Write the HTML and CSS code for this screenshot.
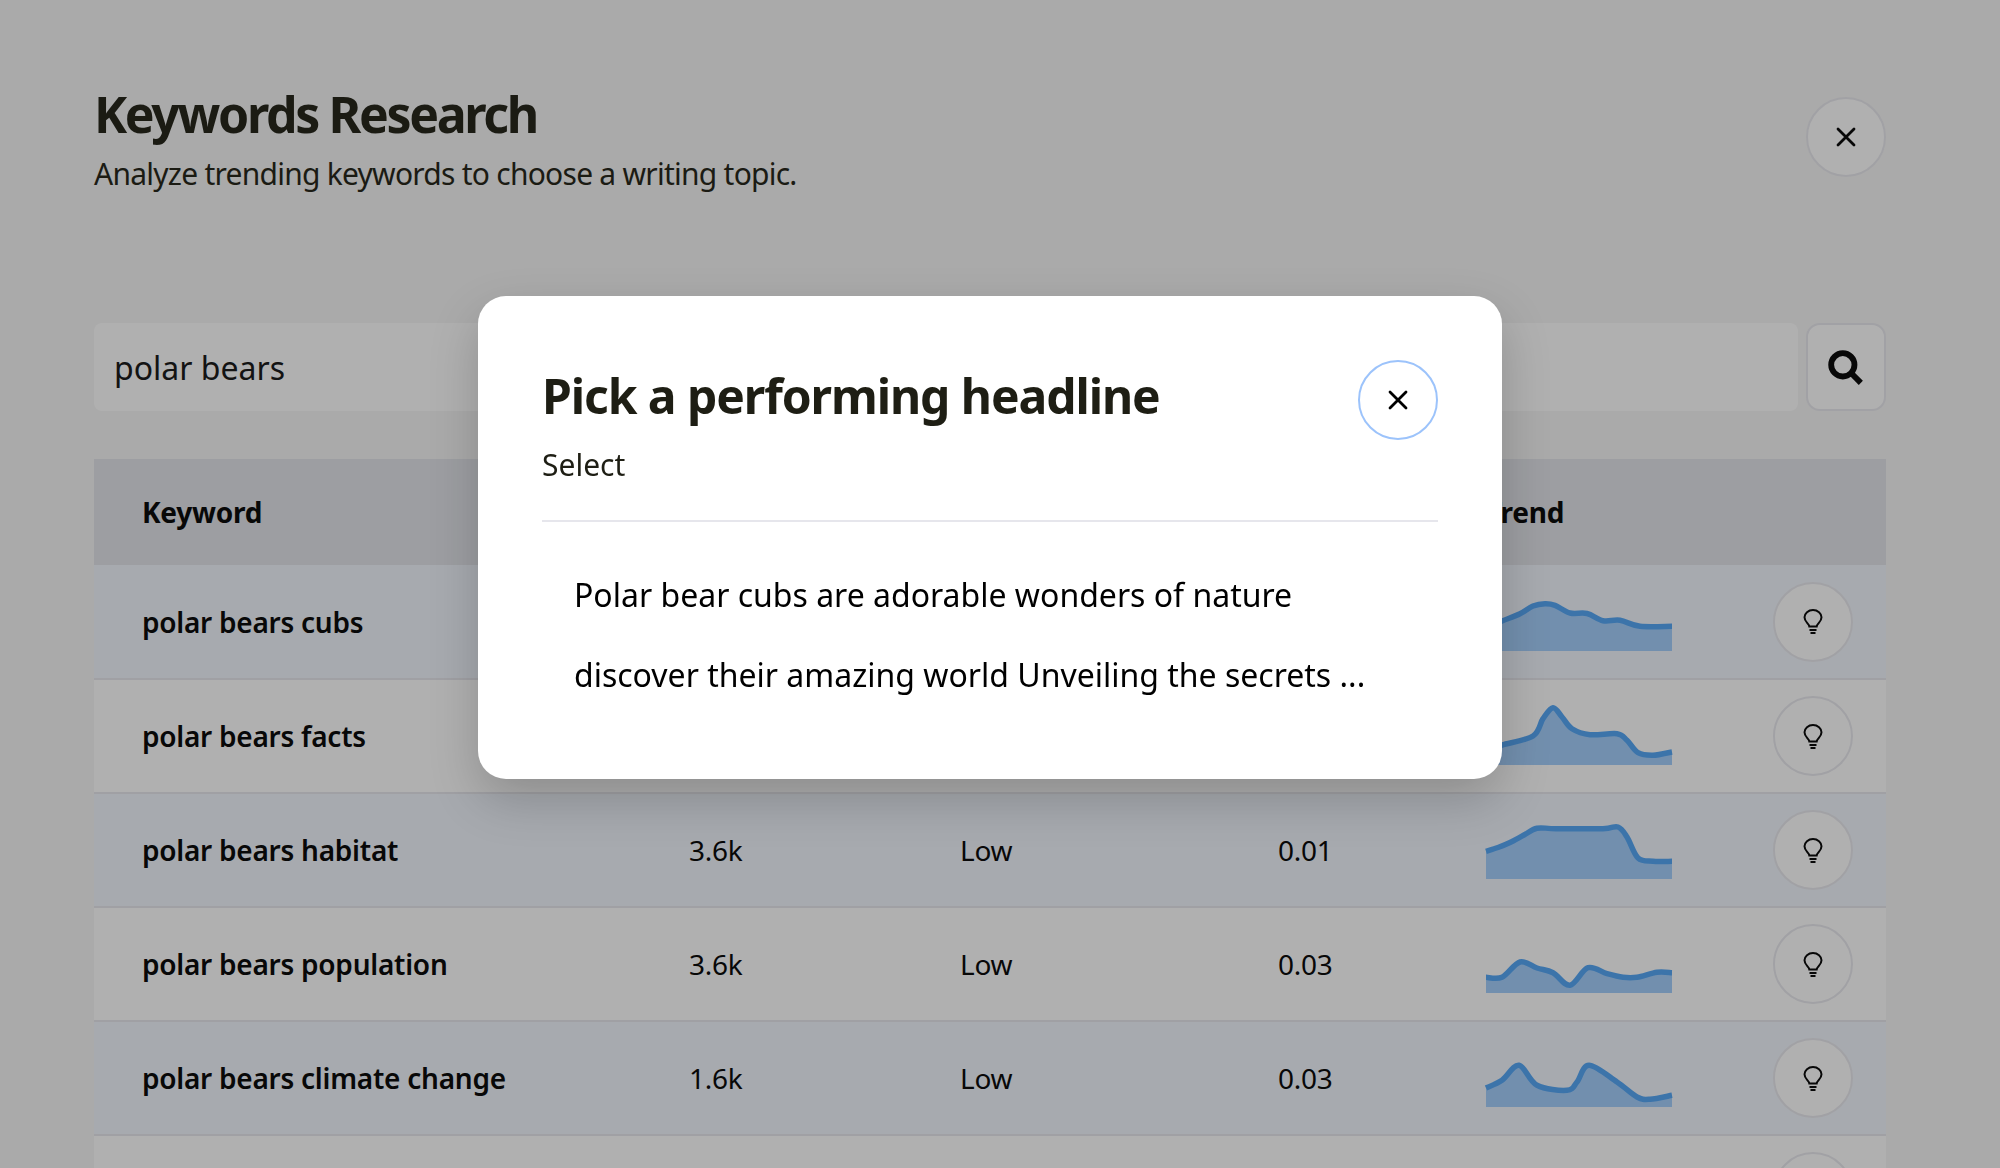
FILE: index.html
```html
<!DOCTYPE html>
<html lang="en">
<head>
    <meta charset="UTF-8">
    <title>Keywords Research</title>
    <link rel="stylesheet" href="styles.css">
</head>
<body>
    <main class="page">
        <header class="page-head">
            <div>
                <h1>Keywords Research</h1>
                <p class="subtitle">Analyze trending keywords to choose a writing topic.</p>
            </div>
            <button class="round-btn page-close">
                <svg class="icon-x" viewBox="0 0 20 20"><path d="M2 2 18 18M18 2 2 18"/></svg>
            </button>
        </header>

        <div class="search">
            <div class="search-input">polar bears</div>
            <button class="search-btn">
                <svg class="icon-search" viewBox="0 0 34 34"><circle cx="14" cy="14" r="11"/><path d="M22 22 31 31"/></svg>
            </button>
        </div>

        <table class="keywords">
            <colgroup>
                <col class="col-keyword">
                <col class="col-volume">
                <col class="col-comp">
                <col class="col-cpc">
                <col class="col-trend">
                <col class="col-action">
            </colgroup>
            <thead>
                <tr><th>Keyword</th><th></th><th></th><th></th><th>Trend</th><th></th></tr>
            </thead>
            <tbody>
                <tr>
                    <td>polar bears cubs</td><td></td><td></td><td></td>
                    <td><svg class="spark" data-points="0,36 16,29 34,21.7 47,14 59,11.7 69,13.3 84,21 101,21.500 117,28.700 134,28.300 154,34.300 186,34.300"></svg></td>
                    <td><button class="round-btn"><svg class="icon-bulb" viewBox="0 0 20 25"><path d="M6.3 17.5C6 14.6 1.5 13 1.5 8.3a8.5 7.3 0 0 1 17 0c0 4.7-4.500 6.300-4.800 9.200z"/><path d="M6.500 21h7M7.500 24h5"/></svg></button></td>
                </tr>
                <tr>
                    <td>polar bears facts</td><td></td><td></td><td></td>
                    <td><svg class="spark" data-points="0,44 16,39 47,30 57,12.7 67,1.7 76,11 86,22.7 104,28.7 131,27.700 141,34.300 152,46.700 167,49.300 186,46"></svg></td>
                    <td><button class="round-btn"><svg class="icon-bulb" viewBox="0 0 20 25"><path d="M6.3 17.5C6 14.6 1.5 13 1.5 8.3a8.5 7.3 0 0 1 17 0c0 4.7-4.500 6.300-4.800 9.200z"/><path d="M6.500 21h7M7.500 24h5"/></svg></button></td>
                </tr>
                <tr>
                    <td>polar bears habitat</td><td>3.6k</td><td>Low</td><td>0.01</td>
                    <td><svg class="spark" data-points="0,31.300 12,27.500 24,22.500 38,15 51,8.200 70,8.700 117,8.700 132,7 141,17 152,38 167,41.300 186,41.300"></svg></td>
                    <td><button class="round-btn"><svg class="icon-bulb" viewBox="0 0 20 25"><path d="M6.3 17.5C6 14.6 1.5 13 1.5 8.3a8.5 7.3 0 0 1 17 0c0 4.7-4.500 6.300-4.800 9.200z"/><path d="M6.500 21h7M7.500 24h5"/></svg></button></td>
                </tr>
                <tr>
                    <td>polar bears population</td><td>3.6k</td><td>Low</td><td>0.03</td>
                    <td><svg class="spark" data-points="0,43.300 16,43.300 34,28 51,34 67,38.700 84,51.300 102,33.700 121,39.700 137,43.300 151,43.300 171,38.300 186,38.700"></svg></td>
                    <td><button class="round-btn"><svg class="icon-bulb" viewBox="0 0 20 25"><path d="M6.3 17.5C6 14.6 1.5 13 1.5 8.3a8.5 7.3 0 0 1 17 0c0 4.7-4.500 6.300-4.800 9.200z"/><path d="M6.500 21h7M7.500 24h5"/></svg></button></td>
                </tr>
                <tr>
                    <td>polar bears climate change</td><td>1.6k</td><td>Low</td><td>0.03</td>
                    <td><svg class="spark" data-points="0,40 16,32.300 33,17.300 51,37.300 81,42.300 91,34 103,17.300 131,34 151,49 164,51.300 186,47.300"></svg></td>
                    <td><button class="round-btn"><svg class="icon-bulb" viewBox="0 0 20 25"><path d="M6.3 17.5C6 14.6 1.5 13 1.5 8.3a8.5 7.3 0 0 1 17 0c0 4.7-4.500 6.300-4.800 9.200z"/><path d="M6.500 21h7M7.500 24h5"/></svg></button></td>
                </tr>
                <tr>
                    <td></td><td></td><td></td><td></td><td></td>
                    <td><button class="round-btn"><svg class="icon-bulb" viewBox="0 0 20 25"><path d="M6.3 17.5C6 14.6 1.5 13 1.5 8.3a8.5 7.3 0 0 1 17 0c0 4.7-4.500 6.300-4.800 9.200z"/><path d="M6.500 21h7M7.500 24h5"/></svg></button></td>
                </tr>
            </tbody>
        </table>
    </main>

    <!-- Headline picker -->
    <div class="overlay">
        <section class="modal">
            <div class="modal-head">
                <div class="modal-titles">
                    <h2>Pick a performing headline</h2>
                    <p class="modal-sub">Select</p>
                </div>
                <button class="round-btn modal-close">
                    <svg class="icon-x" viewBox="0 0 20 20"><path d="M2 2 18 18M18 2 2 18"/></svg>
                </button>
            </div>
            <p class="headline">Polar bear cubs are adorable wonders of nature discover their amazing world Unveiling the secrets ...</p>
        </section>
    </div>

    <script src="script.js"></script>
</body>
</html>
```

FILE: styles.css
```css
* {
    margin: 0;
    padding: 0;
    box-sizing: border-box;
}

body {
    font-family: "Noto Sans", sans-serif;
    background: #f6f6f6;
    color: #000;
    height: 1168px;
    overflow: hidden;
}

button {
    font: inherit;
    cursor: pointer;
}

.page {
    height: 1168px;
    padding: 85px 114px 0 94px;
    overflow: hidden;
}

.page-head {
    display: flex;
    justify-content: space-between;
    align-items: flex-start;
    height: 238px;
    color: #1d1d12;
}

.page-head h1 {
    font-size: 50px;
    line-height: 58px;
    font-weight: 700;
    letter-spacing: -2.35px;
}

.subtitle {
    font-size: 30px;
    line-height: 40px;
    margin-top: 11px;
    letter-spacing: -0.75px;
}

.round-btn {
    width: 80px;
    height: 80px;
    border-radius: 50%;
    border: 2px solid #e9e9ee;
    background: #fff;
    display: flex;
    align-items: center;
    justify-content: center;
}

.page-close {
    margin-top: 12px;
}

.icon-x {
    width: 20px;
    height: 20px;
    fill: none;
    stroke: #000;
    stroke-width: 2.800;
    stroke-linecap: round;
}

.search {
    display: flex;
    gap: 8px;
    height: 88px;
    margin-bottom: 48px;
}

.search-input {
    flex: 1;
    background: #fff;
    border-radius: 8px;
    padding-left: 20px;
    font-size: 32px;
    line-height: 90px;
    color: #111;
}

.search-btn {
    width: 80px;
    height: 88px;
    background: #fff;
    border: 2px solid #e9e9ee;
    border-radius: 14px;
    display: flex;
    align-items: center;
    justify-content: center;
}

.icon-search {
    width: 36px;
    height: 36px;
    margin-top: 2px;
    fill: none;
    stroke: #000;
    stroke-width: 5.500;
}

.keywords {
    width: 1792px;
    table-layout: fixed;
    border-collapse: collapse;
    font-size: 28px;
    letter-spacing: -0.25px;
}

.col-keyword { width: 595px; }
.col-volume { width: 271px; }
.col-comp { width: 318px; }
.col-cpc { width: 208px; }
.col-trend { width: 287px; }
.col-action { width: 113px; }

.keywords th {
    height: 106px;
    background: #e2e4ea;
    text-align: left;
    font-weight: 700;
}

.keywords td {
    height: 114px;
    border-bottom: 2px solid #e7e7ed;
    background: #fff;
}

.keywords tbody tr:nth-child(odd) td {
    background: #f1f6fd;
}

.keywords th:first-child,
.keywords td:first-child {
    padding-left: 48px;
}

.keywords td:first-child {
    font-weight: 600;
}

.spark {
    display: block;
    width: 186px;
    height: 60px;
    overflow: visible;
}

.spark .area {
    fill: #a2cefc;
}

.spark .line {
    fill: none;
    stroke: #50a4f6;
    stroke-width: 5.500;
}

.icon-bulb {
    width: 20px;
    height: 25px;
    fill: none;
    stroke: #000;
    stroke-width: 2;
}

.overlay {
    position: fixed;
    inset: 0;
    background: rgba(23, 23, 23, 0.341);
    display: flex;
    justify-content: center;
    align-items: flex-start;
    padding: 296px 20px 0 0;
}

.modal {
    width: 1024px;
    background: #fff;
    border-radius: 28px;
    padding: 64px;
    box-shadow: 0 20px 50px rgba(0, 0, 0, 0.2);
    color: #1e1e14;
}

.modal-head {
    display: flex;
    justify-content: space-between;
    align-items: flex-start;
    height: 162px;
    border-bottom: 2px solid #e6e6ec;
}

.modal-titles {
    padding-top: 6px;
}

.modal-head h2 {
    font-size: 48px;
    line-height: 60px;
    font-weight: 700;
    letter-spacing: -1.070px;
}

.modal-sub {
    font-size: 30px;
    line-height: 38px;
    margin-top: 20px;
}

.modal-close {
    border-color: #9cc3fb;
}

.headline {
    font-size: 32px;
    line-height: 80px;
    margin-top: 33px;
    padding: 0 32px;
    color: #000;
}
```

FILE: script.js
```js
// Turn each sparkline's point list into a smoothed line with a filled area
document.querySelectorAll('.spark').forEach(svg => {
    const pts = svg.dataset.points.split(' ').map(p => p.split(',').map(Number));
    const bottom = 59;
    let d = `M${pts[0][0]} ${pts[0][1]}`;
    for (let i = 0; i < pts.length - 1; i++) {
        const p0 = pts[i - 1] || pts[i];
        const p1 = pts[i];
        const p2 = pts[i + 1];
        const p3 = pts[i + 2] || p2;
        const c1x = p1[0] + (p2[0] - p0[0]) / 6;
        const c1y = p1[1] + (p2[1] - p0[1]) / 6;
        const c2x = p2[0] - (p3[0] - p1[0]) / 6;
        const c2y = p2[1] - (p3[1] - p1[1]) / 6;
        d += `C${c1x} ${c1y} ${c2x} ${c2y} ${p2[0]} ${p2[1]}`;
    }
    const last = pts[pts.length - 1][0];
    svg.setAttribute('viewBox', '0 0 186 60');
    svg.innerHTML = `<path class="area" d="${d}L${last} ${bottom}L0 ${bottom}Z"/><path class="line" d="${d}"/>`;
});
```
